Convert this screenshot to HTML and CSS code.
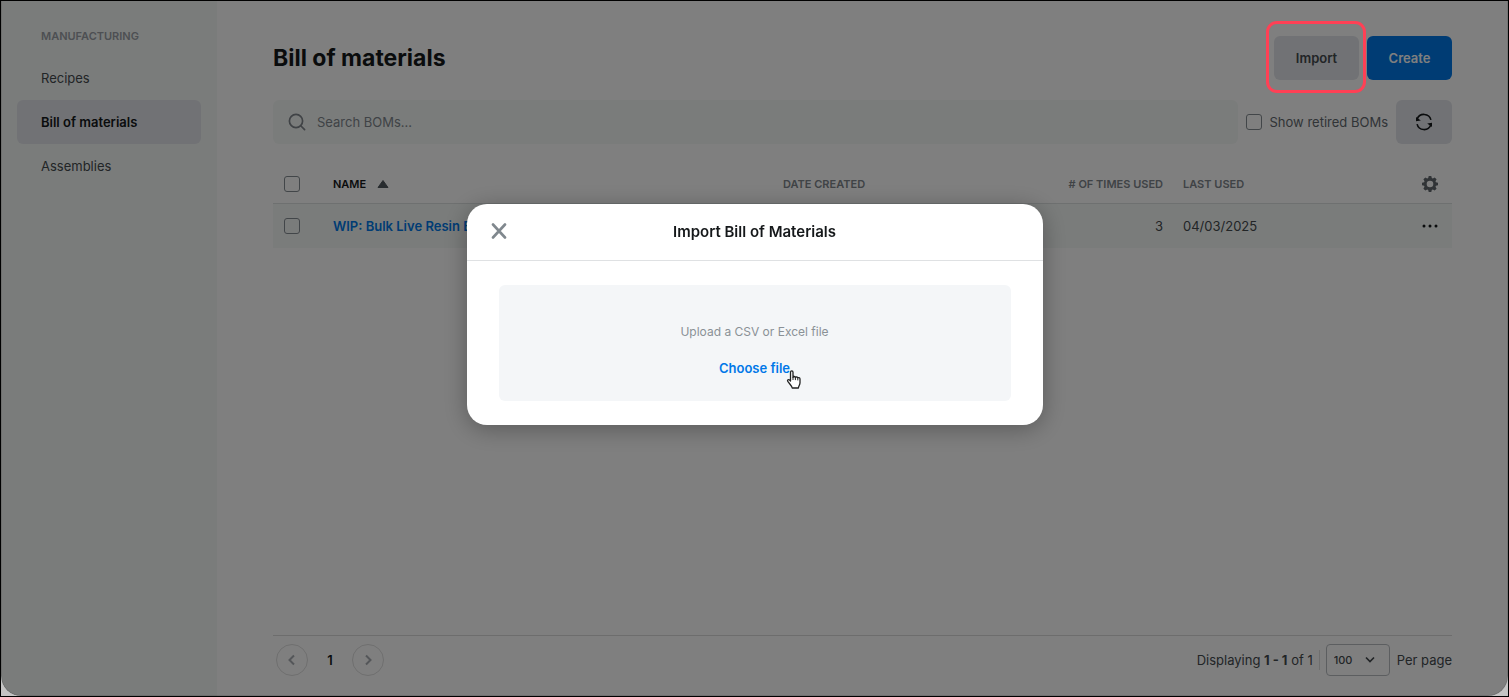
FILE: index.html
```html
<!DOCTYPE html>
<html lang="en">
<head>
    <meta charset="UTF-8">
    <meta name="viewport" content="width=device-width, initial-scale=1.0">
    <title>Bill of materials</title>
    <link rel="stylesheet" href="styles.css">
</head>
<body>
    <div class="app">
        <nav class="sidebar">
            <h2 class="sidebar-title">MANUFACTURING</h2>
            <a class="nav-link" href="#recipes">Recipes</a>
            <a class="nav-link active" href="#bom">Bill of materials</a>
            <a class="nav-link" href="#assemblies">Assemblies</a>
        </nav>

        <main class="main">
            <header class="page-header">
                <h1>Bill of materials</h1>
                <div class="header-actions">
                    <div class="import-wrap">
                        <button class="btn btn-secondary" type="button">Import</button>
                        <span class="highlight"></span>
                    </div>
                    <button class="btn btn-primary" type="button">Create</button>
                </div>
            </header>

            <div class="toolbar">
                <div class="search">
                    <svg width="18" height="18" viewBox="0 0 18 18" fill="none" stroke="currentColor" stroke-width="1.7" stroke-linecap="round">
                        <circle cx="8" cy="8" r="6.6"/>
                        <path d="M13 13l3.600 3.600"/>
                    </svg>
                    <input type="text" placeholder="Search BOMs..." aria-label="Search BOMs">
                </div>
                <label class="retired">
                    <input class="check" type="checkbox">
                    Show retired BOMs
                </label>
                <button class="btn btn-refresh" type="button" aria-label="Refresh">
                    <svg width="18" height="18" viewBox="0 0 18 18" fill="none" stroke="currentColor" stroke-width="1.6">
                        <path d="M2.200 6A7.200 7.200 0 0 1 15.900 6.900"/>
                        <path d="M15.800 12A7.200 7.200 0 0 1 2.100 11.100"/>
                        <path d="M1 4v4.300l4.800-.9z" fill="currentColor" stroke="none"/>
                        <path d="M17 14V9.700l-4.800.9z" fill="currentColor" stroke="none"/>
                    </svg>
                </button>
            </div>

            <table class="bom-table">
                <colgroup>
                    <col class="col-check">
                    <col>
                    <col class="col-created">
                    <col class="col-times">
                    <col class="col-last">
                    <col class="col-menu">
                </colgroup>
                <thead>
                    <tr>
                        <th><input class="check" type="checkbox" aria-label="Select all"></th>
                        <th class="sorted">NAME
                            <svg width="12" height="8" viewBox="0 0 12 8"><path d="M6 .5L11 7.5H1z" fill="currentColor" stroke="currentColor" stroke-linejoin="round"/></svg>
                        </th>
                        <th>DATE CREATED</th>
                        <th class="num"># OF TIMES USED</th>
                        <th>LAST USED</th>
                        <th>
                            <button class="icon-btn gear" type="button" aria-label="Table settings">
                                <svg width="16" height="16" viewBox="0 0 16 16" fill="currentColor" fill-rule="evenodd">
                                    <path d="M6.7 0h2.6l.5 2.1 1 .4 1.9-1.1 1.9 1.9-1.1 1.9.4 1 2.1.5v2.6l-2.1.5-.4 1 1.1 1.9-1.9 1.9-1.9-1.1-1 .4-.5 2.1H6.7l-.5-2.1-1-.4-1.9 1.1-1.9-1.9 1.1-1.9-.4-1L0 9.3V6.7l2.1-.5.4-1-1.1-1.9 1.9-1.9 1.9 1.1 1-.4zM8 4.7a3.3 3.3 0 1 0 0 6.6 3.3 3.3 0 0 0 0-6.6z"/>
                                </svg>
                            </button>
                        </th>
                    </tr>
                </thead>
                <tbody>
                    <tr>
                        <td><input class="check" type="checkbox" aria-label="Select row"></td>
                        <td><a class="bom-link" href="#wip">WIP: Bulk Live Resin B</a></td>
                        <td></td>
                        <td class="num">3</td>
                        <td>04/03/2025</td>
                        <td>
                            <button class="icon-btn" type="button" aria-label="Row actions">
                                <svg width="16" height="16" viewBox="0 0 16 16" fill="currentColor">
                                    <circle cx="2" cy="8" r="1.5"/>
                                    <circle cx="8" cy="8" r="1.5"/>
                                    <circle cx="14" cy="8" r="1.5"/>
                                </svg>
                            </button>
                        </td>
                    </tr>
                </tbody>
            </table>

            <footer class="table-footer">
                <div class="pager">
                    <button class="page-btn" type="button" aria-label="Previous page">
                        <svg width="10" height="12" viewBox="0 0 10 12" fill="none" stroke="currentColor" stroke-width="2"><path d="M7 1.5L2.5 6 7 10.5"/></svg>
                    </button>
                    <span class="page-number">1</span>
                    <button class="page-btn" type="button" aria-label="Next page">
                        <svg width="10" height="12" viewBox="0 0 10 12" fill="none" stroke="currentColor" stroke-width="2"><path d="M3 1.5L7.5 6 3 10.5"/></svg>
                    </button>
                </div>
                <div class="page-info">
                    <span class="displaying">Displaying <b>1 - 1</b> of 1</span>
                    <span class="select-wrap">
                        <select id="perPage">
                            <option>100</option>
                        </select>
                        <svg width="10" height="8" viewBox="0 0 10 8" fill="none" stroke="currentColor" stroke-width="1.7"><path d="M1 1.5l4 4 4-4"/></svg>
                    </span>
                    <label for="perPage">Per page</label>
                </div>
            </footer>
        </main>
    </div>

    <div class="overlay">
        <div class="modal" role="dialog" aria-labelledby="modalTitle">
            <div class="modal-header">
                <button class="close-btn" type="button" aria-label="Close">
                    <svg width="16" height="16" viewBox="0 0 16 16" fill="none" stroke="currentColor" stroke-width="2.600" stroke-linecap="round"><path d="M2 1.500l12 13M14 1.500L2 14.500"/></svg>
                </button>
                <h2 id="modalTitle">Import Bill of Materials</h2>
            </div>
            <div class="modal-body">
                <div class="dropzone">
                    <p>Upload a CSV or Excel file</p>
                    <button class="choose-btn" type="button">Choose file
                        <svg class="cursor" width="16" height="20" viewBox="0 0 16 20">
                            <path d="M4.5 11V2.3C4.5 .5 7 .5 7 2.3v5c.2-1.2 2.3-1 2.4.3.3-1 2.2-.8 2.4.5.4-.9 2.2-.6 2.2 1v3.6c0 2.2-1.4 3.2-1.6 5.3H6.2C5.8 15.8 3.6 14 1.8 11.4c-.9-1.4.8-2.4 1.8-1.4z" fill="#fff" stroke="#222" stroke-width="1.3" stroke-linejoin="round"/>
                            <path d="M7 7v3M9.400 7.800v2.300M11.800 8.400v2" stroke="#222" stroke-width="1"/>
                        </svg>
                    </button>
                </div>
            </div>
        </div>
    </div>
</body>
</html>
```

FILE: styles.css
```css
/* Basic Styles */
* {
    box-sizing: border-box;
}

body {
    font-family: Inter, "Liberation Sans", sans-serif;
    font-size: 13px;
    line-height: 20px;
    color: #444a4e;
    background-color: #c4c4c4;
    margin: 0;
    border: 1px solid #000;
}

h1, h2, p {
    margin: 0;
}

button, input, select {
    font: inherit;
    color: inherit;
}

button {
    border: none;
    padding: 0;
    background: none;
    cursor: pointer;
}

svg {
    display: block;
}

.app {
    display: flex;
    min-height: calc(100vh - 2px);
    background-color: #fff;
    border-radius: 0 0 20px 20px;
    overflow: hidden;
}

/* Sidebar */
.sidebar {
    width: 216px;
    flex-shrink: 0;
    padding: 25px 16px;
    background-color: #f5f9f7;
}

.sidebar-title {
    padding: 0 24px;
    margin-bottom: 10px;
    font-size: 11px;
    font-weight: 600;
    color: #9a9fa6;
}

.nav-link {
    display: block;
    padding: 12px 24px;
    border-radius: 6px;
    color: #444a4e;
    text-decoration: none;
}

.nav-link.active {
    background-color: #e3e5ea;
    color: #15181a;
    font-weight: 600;
}

/* Page */
.main {
    flex: 1;
    display: flex;
    flex-direction: column;
    padding: 35px 56px 20px;
}

.page-header {
    display: flex;
    align-items: center;
    justify-content: space-between;
    margin-bottom: 20px;
}

h1 {
    font-size: 23px;
    line-height: 32px;
    font-weight: 700;
    color: #15181a;
}

.header-actions {
    display: flex;
    gap: 8px;
}

.import-wrap {
    position: relative;
}

.btn {
    height: 44px;
    min-width: 85px;
    border-radius: 6px;
    font-weight: 600;
}

.btn-secondary {
    background-color: #e3e5ea;
    color: #444a4e;
}

.btn-primary {
    background-color: #0078e8;
    color: #fff;
}

.highlight {
    position: absolute;
    inset: -15px -7px -13px -8px;
    border: 3px solid #ff4055;
    border-radius: 11px;
    z-index: 20;
    pointer-events: none;
}

/* Toolbar */
.toolbar {
    display: flex;
    align-items: center;
    gap: 8px;
    margin-bottom: 20px;
}

.search {
    flex: 1;
    display: flex;
    align-items: center;
    gap: 11px;
    height: 44px;
    padding: 0 15px;
    border-radius: 6px;
    background-color: #f5f9f7;
    color: #80868c;
}

.search input {
    flex: 1;
    border: none;
    outline: none;
    padding: 0;
    background: none;
}

.search input::placeholder {
    color: #80868c;
}

.retired {
    display: flex;
    align-items: center;
    gap: 8px;
    color: #62686e;
}

.check {
    appearance: none;
    display: block;
    width: 16px;
    height: 16px;
    margin: 0;
    border: 1px solid #858c92;
    border-radius: 3px;
}

.btn-refresh {
    display: flex;
    align-items: center;
    justify-content: center;
    min-width: 56px;
    background-color: #e3e5ea;
    color: #15181a;
}

/* Table Styling */
.bom-table {
    width: 100%;
    table-layout: fixed;
    border-collapse: separate;
    border-spacing: 0;
}

.col-check {
    width: 50px;
}

.col-created {
    width: 275px;
}

.col-times {
    width: 125px;
}

.col-last {
    width: 235px;
}

.col-menu {
    width: 44px;
}

th, td {
    height: 44px;
    padding: 0 10px;
    text-align: left;
    white-space: nowrap;
}

th:first-child, td:first-child {
    padding-left: 11px;
}

th {
    height: 40px;
    border-bottom: 1px solid #dce1e1;
    font-size: 11px;
    font-weight: 600;
    color: #80868c;
}

.sorted {
    color: #15181a;
}

.sorted svg {
    display: inline-block;
    margin-left: 8px;
    color: #50585e;
}

.num {
    text-align: right;
}

tbody tr {
    background-color: #f5f9f7;
}

.bom-link {
    color: #0078e8;
    font-weight: 600;
    text-decoration: none;
}

.icon-btn {
    display: block;
    margin-left: 4px;
    color: #15181a;
}

.gear {
    color: #62696e;
}

/* Footer */
.table-footer {
    display: flex;
    align-items: center;
    justify-content: space-between;
    margin-top: auto;
    padding: 8px 0 0 3px;
    border-top: 1px solid #dadada;
}

.pager, .page-info {
    display: flex;
    align-items: center;
}

.page-btn {
    display: flex;
    align-items: center;
    justify-content: center;
    width: 32px;
    height: 32px;
    border: 1px solid #dedede;
    border-radius: 50%;
    color: #a8adb2;
}

.page-number {
    width: 44px;
    text-align: center;
    font-weight: 600;
    color: #15181a;
}

.displaying {
    padding-right: 6px;
    border-right: 1px solid #dedede;
}

.select-wrap {
    position: relative;
    margin: 0 7px 0 6px;
}

.select-wrap select {
    appearance: none;
    display: block;
    width: 64px;
    height: 32px;
    padding: 0 7px;
    border: 1px solid #b8bcc0;
    border-radius: 4px;
    background: none;
    font-size: 11px;
    font-weight: 500;
}

.select-wrap svg {
    position: absolute;
    top: 12px;
    right: 15px;
    pointer-events: none;
}

/* Modal */
.overlay {
    position: fixed;
    inset: 1px;
    z-index: 10;
    display: flex;
    align-items: flex-start;
    justify-content: center;
    padding-top: 203px;
    border: 1px solid rgba(0, 0, 0, 0.1);
    border-width: 0 1px 1px;
    border-radius: 0 0 20px 20px;
    background-color: rgba(0, 0, 0, 0.5);
}

.modal {
    width: 576px;
    border-radius: 20px;
    background-color: #fff;
    box-shadow: 0 4px 24px rgba(0, 0, 0, 0.3);
}

.modal-header {
    position: relative;
    padding: 18px 24px;
    border-bottom: 1px solid #dfe1e3;
    text-align: center;
}

.modal-header h2 {
    font-size: 15px;
    line-height: 20px;
    font-weight: 600;
    color: #15181a;
}

.close-btn {
    position: absolute;
    top: 19px;
    left: 24px;
    color: #80888e;
}

.modal-body {
    padding: 24px 32px;
}

.dropzone {
    padding: 37px 24px 23px;
    border-radius: 6px;
    background-color: #f4f6f8;
    text-align: center;
    color: #8a9196;
}

.dropzone p {
    margin-bottom: 16px;
    font-size: 12px;
}

.choose-btn {
    position: relative;
    color: #0078e8;
    font-weight: 600;
}

.cursor {
    position: absolute;
    top: 12px;
    right: -12px;
}
```
